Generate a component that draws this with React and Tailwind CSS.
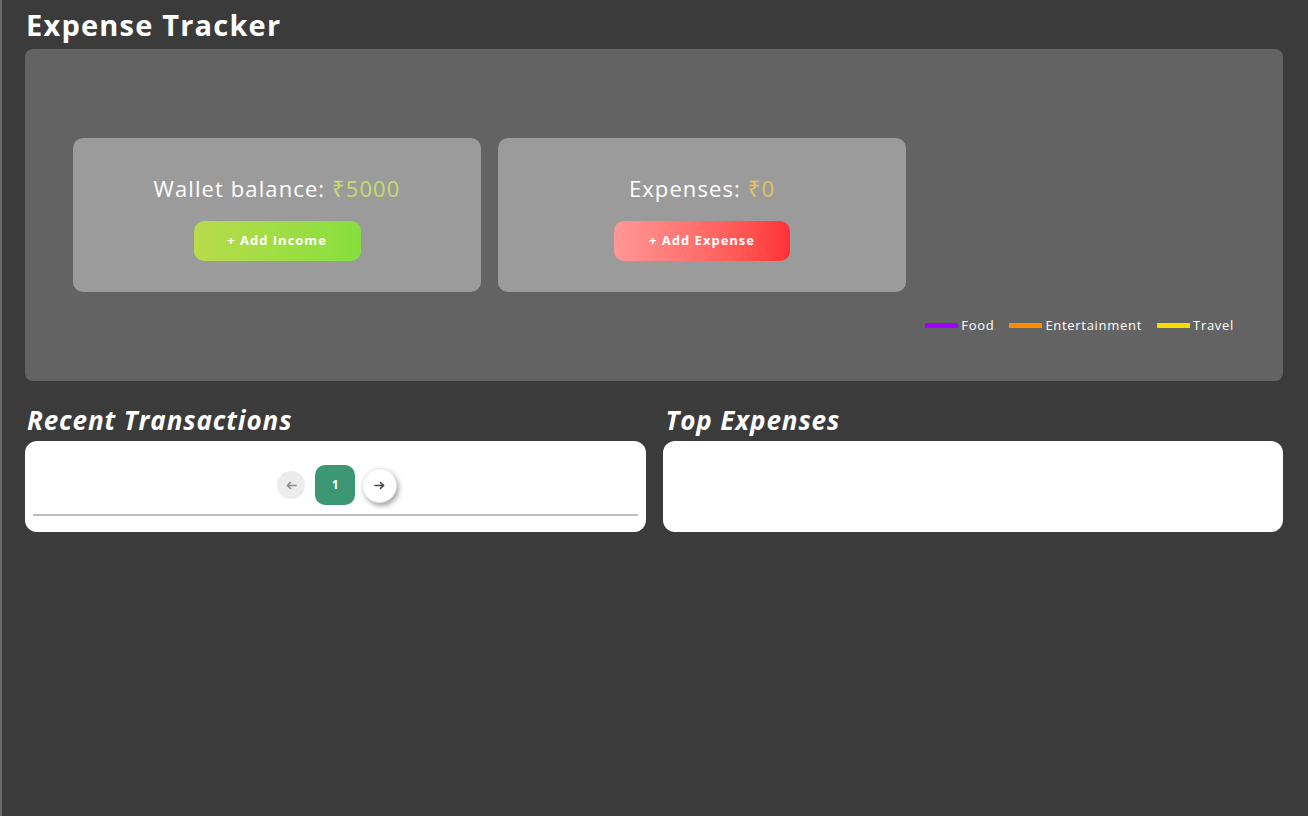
function Arrow({ dir, color }) {
  return (
    <svg width="11" height="9" viewBox="0 0 11 9" fill="none" stroke={color} strokeWidth="1.6" strokeLinecap="round" strokeLinejoin="round">
      {dir === "left" ? (
        <g><path d="M10 4.5H1.5" /><path d="M4.5 1.5L1.5 4.5L4.5 7.5" /></g>
      ) : (
        <g><path d="M1 4.5H9.5" /><path d="M6.5 1.5L9.5 4.5L6.5 7.5" /></g>
      )}
    </svg>
  );
}

export default function App() {
  const font = { fontFamily: '"Open Sans", "Noto Sans", sans-serif' };
  return (
    <div className="min-h-[816px] w-full bg-[#3b3b3b] border-l-2 border-[#6a6a6a] pl-[23px] pr-[25px] pt-[6px] text-white" style={font}>
      <h1 className="text-[29px] font-bold leading-[38px] tracking-[1.2px] pl-[1px]">Expense Tracker</h1>
      <div className="mt-[5px] h-[332px] rounded-[8px] bg-[#636363] flex items-center pl-[48px] pr-[48px]">
        <div className="flex gap-[17px]">
          <div className="w-[408px] h-[154px] pt-[5px] rounded-[10px] bg-[#9b9b9b] flex flex-col items-center justify-center">
            <div className="text-[22px] leading-[28px] tracking-[1.1px]">
              Wallet balance: <span className="text-[#c6dc6e]">₹5000</span>
            </div>
            <button className="mt-[19px] w-[167px] h-[40px] rounded-[10px] bg-gradient-to-r from-[#b7db4b] to-[#86df3e] text-[13px] font-bold tracking-[1px] text-white">
              + Add Income
            </button>
          </div>
          <div className="w-[408px] h-[154px] pt-[5px] rounded-[10px] bg-[#9b9b9b] flex flex-col items-center justify-center">
            <div className="text-[22px] leading-[28px] tracking-[1.1px]">
              Expenses: <span className="text-[#e3c15a]">₹0</span>
            </div>
            <button className="mt-[19px] w-[176px] h-[40px] rounded-[10px] bg-gradient-to-r from-[#ff9797] to-[#ff2f35] text-[13px] font-bold tracking-[1px] text-white">
              + Add Expense
            </button>
          </div>
        </div>
        <div className="flex-1 self-stretch flex items-end justify-end pb-[46px]">
          <div className="flex items-center gap-[15px] text-[13px] tracking-[0.7px] mr-[1px]">
            <div className="flex items-center gap-[3px]"><span className="w-[33px] h-[5px] bg-[#a000ff] inline-block"></span>Food</div>
            <div className="flex items-center gap-[3px]"><span className="w-[33px] h-[5px] bg-[#ff8c00] inline-block"></span>Entertainment</div>
            <div className="flex items-center gap-[3px]"><span className="w-[33px] h-[5px] bg-[#f2df00] inline-block"></span>Travel</div>
          </div>
        </div>
      </div>
      <div className="mt-[22px] grid grid-cols-2 gap-[17px]">
        <div>
          <h2 className="text-[26px] font-bold italic leading-[34px] tracking-[0.9px] pl-[2px]">Recent Transactions</h2>
          <div className="mt-[4px] h-[91px] rounded-[12px] bg-white px-[8px] pt-[24px]">
            <div className="flex items-center justify-center pl-[4px]">
              <div className="w-[28px] h-[28px] rounded-full bg-[#ececec] flex items-center justify-center">
                <Arrow dir="left" color="#8a8a8a" />
              </div>
              <div className="ml-[10px] w-[40px] h-[40px] rounded-[10px] bg-[#3d9674] flex items-center justify-center text-white text-[12px] font-bold">1</div>
              <div className="ml-[7px] w-[35px] h-[35px] rounded-full bg-white shadow-[2px_3px_5px_rgba(0,0,0,0.35)] border border-[#e6e6e6] flex items-center justify-center">
                <Arrow dir="right" color="#444" />
              </div>
            </div>
            <div className="mt-[9px] h-[2px] bg-[#bdbdbd]"></div>
          </div>
        </div>
        <div>
          <h2 className="text-[26px] font-bold italic leading-[34px] tracking-[0.9px] pl-[3px]">Top Expenses</h2>
          <div className="mt-[4px] h-[91px] rounded-[12px] bg-white"></div>
        </div>
      </div>
    </div>
  );
}
